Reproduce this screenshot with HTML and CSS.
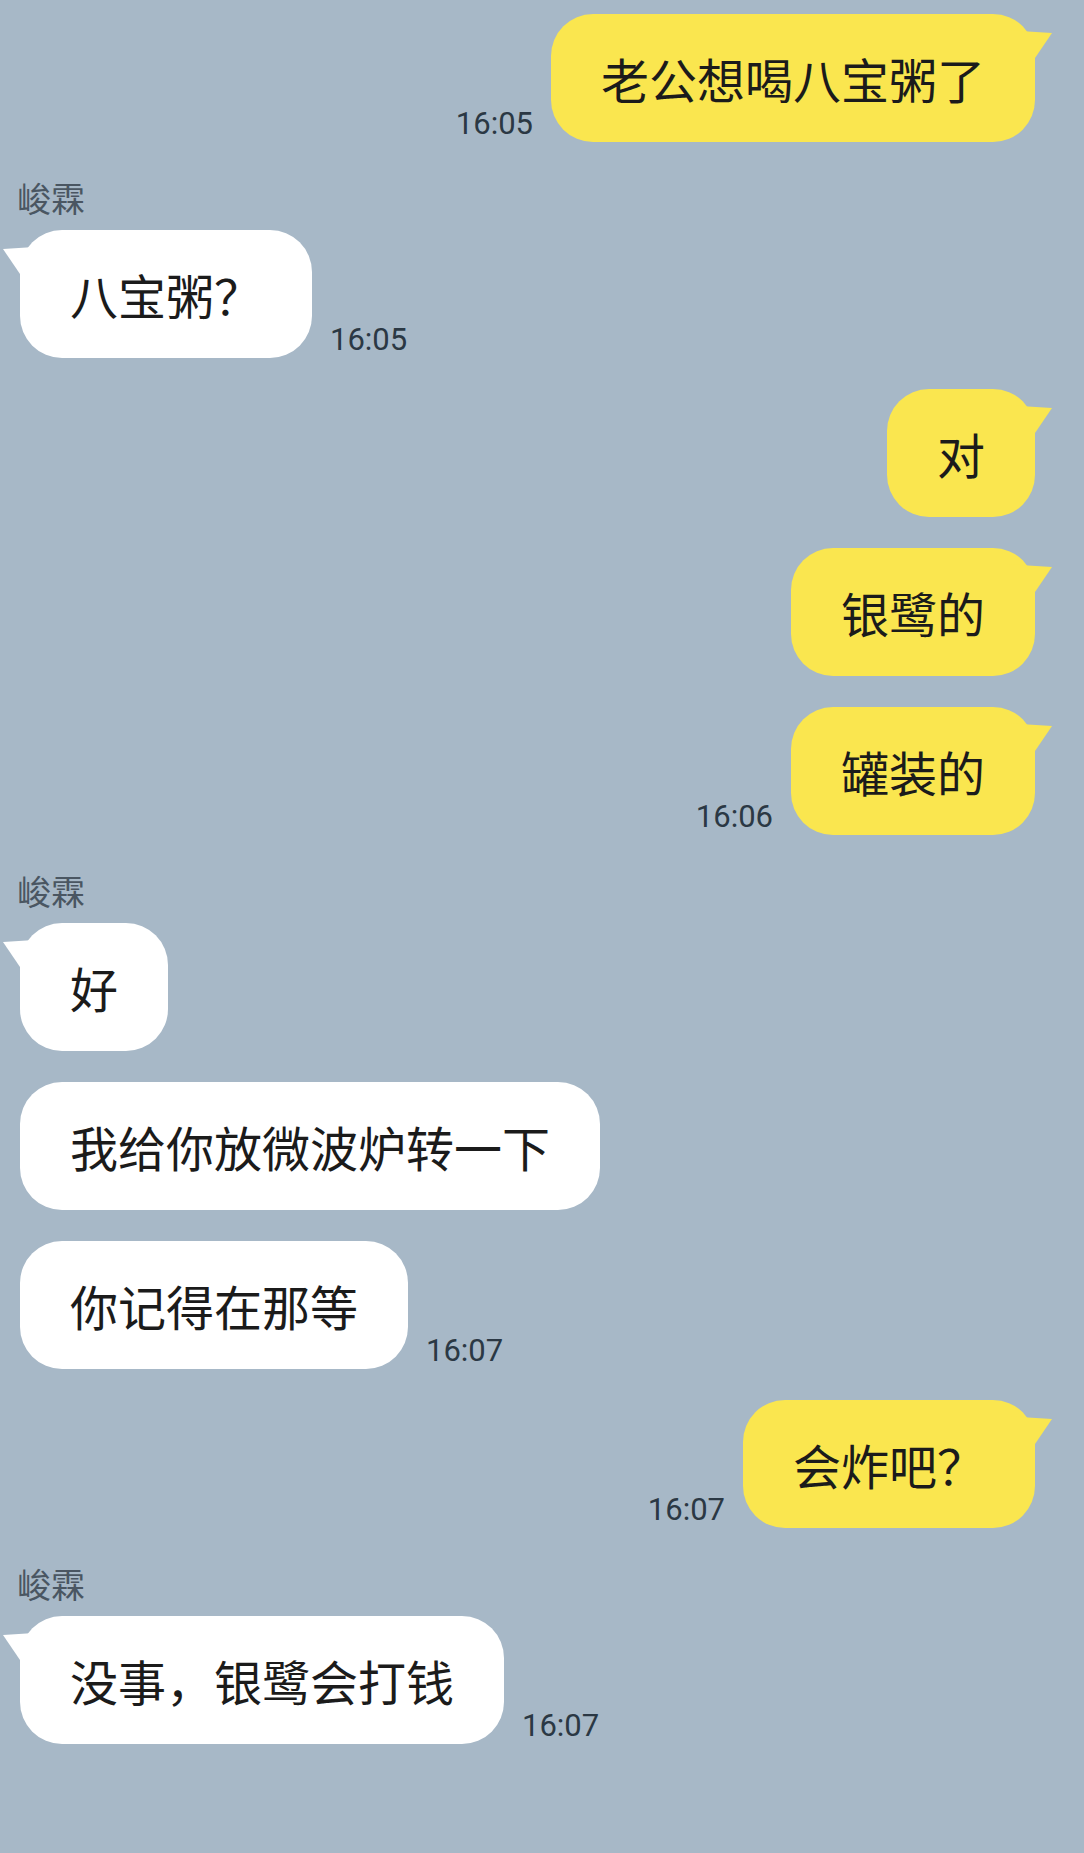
FILE: index.html
```html
<!DOCTYPE html>
<html lang="zh-CN">
<head>
    <meta charset="UTF-8">
    <meta name="viewport" content="width=device-width, initial-scale=1.0">
    <title>聊天</title>
    <link rel="stylesheet" href="styles.css">
</head>
<body>

<main class="chat">

  <div class="row row--me">
    <span class="time">16:05</span>
    <div class="bubble bubble--me tail">老公想喝八宝粥了</div>
  </div>

  <div class="group">
    <div class="name">峻霖</div>
    <div class="row">
      <div class="bubble tail">八宝粥？</div>
      <span class="time">16:05</span>
    </div>
  </div>

  <div class="row row--me">
    <div class="bubble bubble--me tail">对</div>
  </div>
  <div class="row row--me">
    <div class="bubble bubble--me tail">银鹭的</div>
  </div>
  <div class="row row--me">
    <span class="time">16:06</span>
    <div class="bubble bubble--me tail">罐装的</div>
  </div>

  <div class="group">
    <div class="name">峻霖</div>
    <div class="row">
      <div class="bubble tail">好</div>
    </div>
  </div>
  <div class="row">
    <div class="bubble">我给你放微波炉转一下</div>
  </div>
  <div class="row">
    <div class="bubble">你记得在那等</div>
    <span class="time">16:07</span>
  </div>

  <div class="row row--me">
    <span class="time">16:07</span>
    <div class="bubble bubble--me tail">会炸吧？</div>
  </div>

  <div class="group">
    <div class="name">峻霖</div>
    <div class="row">
      <div class="bubble tail">没事，银鹭会打钱</div>
      <span class="time">16:07</span>
    </div>
  </div>

</main>

</body>
</html>
```

FILE: styles.css
```css
:root {
    --clr-bg: #a7b8c7;
    --clr-me: #fae64f;
    --clr-other: #ffffff;
    --clr-text: #1b1b1b;
    --clr-time: #2b3844;
    --clr-name: #4a5662;
}

html,
body {
    margin: 0;
    background: var(--clr-bg);
}

body {
    font-family: "Noto Sans CJK SC", "Noto Sans", sans-serif;
    min-block-size: 100vh;
}

.chat {
    display: flex;
    flex-direction: column;
    gap: 31px;
    padding: 14px 49px 40px 20px;
}

.group {
    display: flex;
    flex-direction: column;
}

.name {
    margin-bottom: 7px;
    margin-left: -3px;
    font-size: 34px;
    line-height: 50px;
    color: var(--clr-name);
}

.row {
    display: flex;
    align-items: flex-end;
    gap: 18px;
}

.row--me {
    justify-content: flex-end;
}

.bubble {
    position: relative;
    padding: 32px 50px;
    font-size: 48px;
    line-height: 64px;
    color: var(--clr-text);
    background: var(--clr-other);
    border-radius: 42px;
    white-space: nowrap;
}

.bubble--me {
    background: var(--clr-me);
}

/* little speech tail in the top corner */
.tail::after {
    content: "";
    position: absolute;
    top: 16px;
    left: -17px;
    width: 47px;
    height: 28px;
    background: inherit;
    clip-path: polygon(0 3px, 100% 0, 100% 100%, 17px 100%);
}

.bubble--me.tail::after {
    left: auto;
    right: -17px;
    clip-path: polygon(100% 3px, 0 0, 0 100%, 30px 100%);
}

.time {
    font-family: Roboto, "Liberation Sans", sans-serif;
    font-size: 31px;
    line-height: 36px;
    color: var(--clr-time);
}
```
